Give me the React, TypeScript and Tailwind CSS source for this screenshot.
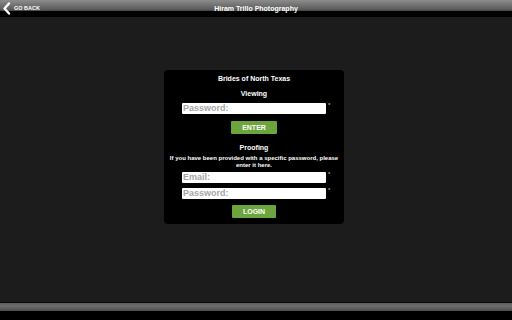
function Field({ placeholder }: { placeholder: string }) {
  return (
    <div className="flex items-start pl-[18px]">
      <input
        placeholder={placeholder}
        className="w-[144px] h-[11px] bg-white pl-[1px] text-[9px] leading-[11px] text-black placeholder:text-[#a6a6a6] outline-none rounded-[1px]"
      />
      <span className="ml-[2px] -mt-[1px] text-[6px] leading-[6px] text-[#8db255]">*</span>
    </div>
  )
}

function GreenButton({ label, width }: { label: string; width: string }) {
  return (
    <button
      className={`${width} h-[13px] mx-auto block bg-[#6ca53e] text-white text-[7px] leading-[13px] font-bold rounded-[1px]`}
    >
      {label}
    </button>
  )
}

export default function App() {
  return (
    <div className="h-screen w-full flex flex-col bg-[#1c1c1c] font-['Liberation_Sans',Arial,sans-serif] overflow-hidden">
      {/* Top bar */}
      <header className="h-[17px] grid grid-cols-[1fr_auto_1fr] items-center bg-[linear-gradient(to_bottom,#8c8c8c_0px,#5e5e5e_9px,#454545_11px,#000_11px,#000_17px)]">
        <div className="flex items-center pl-[2px]">
          <svg width="9" height="13" viewBox="0 0 9 13" className="shrink-0">
            <polyline points="7,1.5 2.5,6.5 7,11.5" fill="none" stroke="white" strokeWidth="2.4" strokeLinecap="round" strokeLinejoin="round" />
          </svg>
          <span className="ml-[3px] text-[5.5px] font-bold text-white leading-none">GO BACK</span>
        </div>
        <div className="text-[7px] font-bold text-white leading-none">Hiram Trillo Photography</div>
        <div />
      </header>

      {/* Content */}
      <main className="flex-1 pt-[53px] pl-[164px]">
        <div className="w-[180px] bg-black rounded-[4px] pt-[5px] pb-[6px] text-white font-bold text-center">
          <div className="text-[7px] leading-[8px]">Brides of North Texas</div>
          <div className="mt-[7px] text-[7px] leading-[8px]">Viewing</div>
          <div className="mt-[5px]">
            <Field placeholder="Password:" />
          </div>
          <div className="mt-[7px]">
            <GreenButton label="ENTER" width="w-[46px]" />
          </div>

          <div className="mt-[10px] text-[7px] leading-[8px]">Proofing</div>
          <p className="mt-[3px] text-[6px] leading-[7px]">
            If you have been provided with a specific password, please
            <br />
            enter it here.
          </p>
          <div className="mt-[3px]">
            <Field placeholder="Email:" />
          </div>
          <div className="mt-[5px]">
            <Field placeholder="Password:" />
          </div>
          <div className="mt-[6px]">
            <GreenButton label="LOGIN" width="w-[44px]" />
          </div>
        </div>
      </main>

      {/* Bottom bar */}
      <footer className="h-[18px] bg-[linear-gradient(to_bottom,#0a0a0a_0px,#0a0a0a_1px,#5c5c5c_1px,#6e6e6e_4px,#4c4c4c_9px,#000_9px,#000_18px)]" />
    </div>
  )
}
